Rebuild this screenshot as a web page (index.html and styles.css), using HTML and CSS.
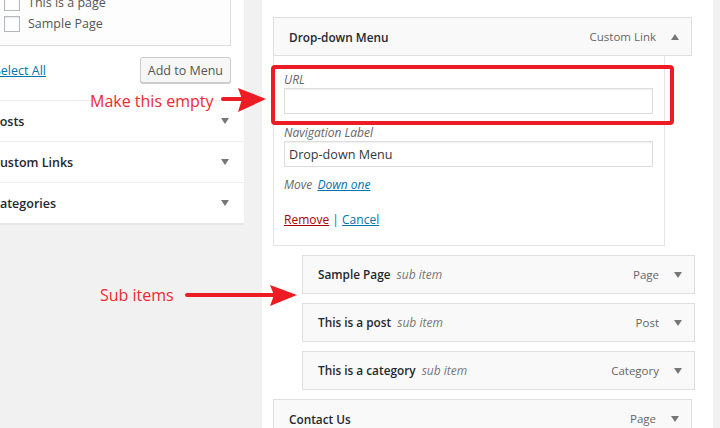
FILE: index.html
```html
<!DOCTYPE html>
<html lang="en">
<head>
  <meta charset="UTF-8">
  <title>Menus</title>
  <link rel="stylesheet" href="styles.css">
</head>
<body>
  <div class="screen">
    <div class="sidebar">
      <div class="pages-panel">
        <ul class="checklist">
          <li><span class="check"></span>This is a page</li>
          <li><span class="check"></span>Sample Page</li>
        </ul>
        <div class="add-row">
          <a href="#" class="select-all">Select All</a>
          <button type="button" class="btn">Add to Menu</button>
        </div>
      </div>
      <div class="section">Posts <i class="tri"></i></div>
      <div class="section">Custom Links <i class="tri"></i></div>
      <div class="section">Categories <i class="tri"></i></div>
    </div>

    <div class="menu-edit">
      <div class="item">
        <div class="item-bar">
          <span class="item-title">Drop-down Menu</span>
          <span class="item-type">Custom Link</span>
          <i class="tri up"></i>
        </div>
        <div class="item-settings">
          <label for="url">URL</label>
          <input type="text" id="url" class="field">
          <label for="navLabel" class="gap">Navigation Label</label>
          <input type="text" id="navLabel" class="field" value="Drop-down Menu">
          <p class="move">Move <a href="#">Down one</a></p>
          <p class="actions"><a href="#" class="remove">Remove</a> <span class="sep">|</span> <a href="#">Cancel</a></p>
        </div>
      </div>

      <div class="item sub">
        <div class="item-bar">
          <span class="item-title">Sample Page <em>sub item</em></span>
          <span class="item-type">Page</span>
          <i class="tri"></i>
        </div>
      </div>
      <div class="item sub">
        <div class="item-bar">
          <span class="item-title">This is a post <em>sub item</em></span>
          <span class="item-type">Post</span>
          <i class="tri"></i>
        </div>
      </div>
      <div class="item sub">
        <div class="item-bar">
          <span class="item-title">This is a category <em>sub item</em></span>
          <span class="item-type">Category</span>
          <i class="tri"></i>
        </div>
      </div>
      <div class="item">
        <div class="item-bar">
          <span class="item-title">Contact Us</span>
          <span class="item-type">Page</span>
          <i class="tri"></i>
        </div>
      </div>
    </div>

    <!-- annotations drawn over the screenshot -->
    <div class="highlight"></div>
    <span class="note note-empty">Make this empty</span>
    <svg class="arrow arrow-empty" width="50" height="28" viewBox="0 0 50 28">
      <line x1="3" y1="13" x2="26" y2="13" stroke="#ed1c24" stroke-width="4" stroke-linecap="round"/>
      <polygon points="18,2 46,13 18,26 22,13" fill="#ed1c24"/>
    </svg>
    <span class="note note-sub">Sub items</span>
    <svg class="arrow arrow-sub" width="116" height="24" viewBox="0 0 116 24">
      <line x1="3" y1="11" x2="92" y2="11" stroke="#ed1c24" stroke-width="4" stroke-linecap="round"/>
      <polygon points="86,1 113,11 86,22 90,11" fill="#ed1c24"/>
    </svg>
  </div>
</body>
</html>
```

FILE: styles.css
```css
body {
  margin: 0;
  background-color: #f1f1f1;
  font-family: "Open Sans", "Liberation Sans", sans-serif;
  font-size: 12px;
  color: #444;
}

.screen {
  position: relative;
  width: 720px;
  height: 428px;
  overflow: hidden;
  display: flex;
  align-items: flex-start;
}

/* left column */
.sidebar {
  width: 268px;
  margin-left: -24px;
  flex-shrink: 0;
  background-color: #fff;
  border-bottom: 1px solid #e5e5e5;
  box-shadow: 0 1px 1px rgba(0, 0, 0, 0.04);
}

.pages-panel {
  padding: 0 13px 17px 14px;
}

.checklist {
  list-style: none;
  margin: -15px 0 0 0;
  padding: 6px 13px 11px;
  border: 1px solid #ddd;
  background-color: #fdfdfd;
}

.checklist li {
  height: 21px;
  line-height: 21px;
  display: flex;
  align-items: center;
  font-size: 12.5px;
  color: #555;
}

.check {
  width: 14px;
  height: 14px;
  border: 1px solid #b4b9be;
  background-color: #fff;
  box-shadow: inset 0 1px 2px rgba(0, 0, 0, 0.1);
  margin-right: 8px;
}

.add-row {
  margin-top: 11px;
  display: flex;
  justify-content: space-between;
  align-items: center;
}

.select-all {
  color: #0073aa;
  text-decoration: underline;
  font-size: 12.5px;
  margin-left: 4px;
}

.btn {
  height: 26px;
  padding: 0 7px;
  font-family: inherit;
  font-size: 12.5px;
  color: #555;
  background-color: #f7f7f7;
  border: 1px solid #ccc;
  border-radius: 3px;
  box-shadow: 0 1px 0 #ccc;
}

.section {
  height: 40px;
  border-top: 1px solid #eee;
  padding: 0 15px 0 16px;
  display: flex;
  align-items: center;
  justify-content: space-between;
  font-size: 12.5px;
  font-weight: 600;
  color: #23282d;
}

.tri {
  width: 0;
  height: 0;
  border-left: 4px solid transparent;
  border-right: 4px solid transparent;
  border-top: 6px solid #777;
}

.tri.up {
  border-top: none;
  border-bottom: 6px solid #777;
}

/* right column */
.menu-edit {
  margin-left: 18px;
  width: 440px;
  height: 428px;
  padding: 17px 0 0 11px;
  background-color: #fff;
  flex-shrink: 0;
}

.item {
  width: 419px;
}

.item + .item {
  margin-top: 9px;
}

.item.sub {
  width: 393px;
  margin-left: 29px;
}

.item-bar {
  height: 37px;
  border: 1px solid #dfdfdf;
  background-color: #f9f9f9;
  padding: 0 12px 0 15px;
  display: flex;
  align-items: center;
}

.item-title {
  flex-grow: 1;
  font-size: 11.8px;
  font-weight: 600;
  color: #23282d;
}

.item-title em {
  font-size: 12px;
  font-weight: 400;
  color: #777;
  margin-left: 3px;
}

.item-type {
  font-size: 11.5px;
  color: #666;
  margin-right: 15px;
}

.item-settings {
  width: 369px;
  border: 1px solid #e5e5e5;
  border-top: none;
  padding: 16px 11px 16px 10px;
}

.item-settings label {
  display: block;
  line-height: 16px;
  font-style: italic;
  color: #666;
}

.item-settings label.gap {
  margin-top: 11px;
}

.field {
  display: block;
  box-sizing: border-box;
  width: 369px;
  height: 26px;
  margin: 0;
  padding: 0 4px;
  border: 1px solid #ddd;
  box-shadow: inset 0 1px 2px rgba(0, 0, 0, 0.07);
  font-family: inherit;
  font-size: 12.6px;
  color: #32373c;
}

.move {
  margin: 9px 0 0;
  line-height: 18px;
  font-style: italic;
  color: #666;
}

.move a {
  color: #0073aa;
  margin-left: 2px;
}

.actions {
  margin: 17px 0 0;
  line-height: 18px;
}

.actions a {
  color: #0073aa;
}

.actions .remove {
  color: #a00;
}

.sep {
  color: #0073aa;
}

/* annotations */
.highlight {
  position: absolute;
  left: 271px;
  top: 65px;
  width: 395px;
  height: 52px;
  border: 4px solid #ed1c24;
  border-radius: 4px;
}

.note {
  position: absolute;
  font-size: 16px;
  line-height: 20px;
  color: #ec2a33;
}

.note-empty {
  left: 90px;
  top: 91px;
}

.note-sub {
  left: 100px;
  top: 285px;
}

.arrow {
  position: absolute;
}

.arrow-empty {
  left: 220px;
  top: 86px;
}

.arrow-sub {
  left: 184px;
  top: 284px;
}
```
